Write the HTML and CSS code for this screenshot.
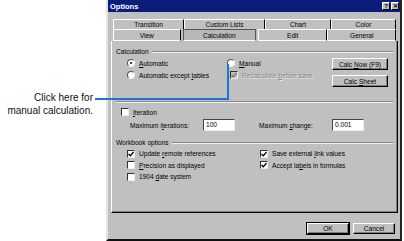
FILE: index.html
```html
<!DOCTYPE html>
<html lang="en">
<head>
  <meta charset="UTF-8">
  <title>Options</title>
  <link rel="stylesheet" href="styles.css">
</head>
<body>

  <div class="page">
    <div class="callout">
      <p>Click here for<br>manual calculation.</p>
    </div>

    <div class="dialog">
      <div class="titlebar">
        <span class="title">Options</span>
        <div class="title-btns">
          <span class="tbtn">?</span>
          <span class="tbtn">&#x2715;</span>
        </div>
      </div>

      <div class="tabs">
        <div class="tab-row back">
          <div class="tab w71">Transition</div>
          <div class="tab w81">Custom Lists</div>
          <div class="tab w66">Chart</div>
          <div class="tab w65">Color</div>
        </div>
        <div class="tab-row front">
          <div class="tab w68">View</div>
          <div class="tab w76 selected">Calculation</div>
          <div class="tab w70">Edit</div>
          <div class="tab w69">General</div>
        </div>
      </div>

      <div class="panel">
        <!-- Calculation group -->
        <div class="group calc">
          <div class="legend"><span>Calculation</span></div>
          <div class="calc-body">
            <div class="col">
              <label class="opt"><span class="radio checked"></span><span><u>A</u>utomatic</span></label>
              <label class="opt"><span class="radio"></span><span>Automatic except <u>t</u>ables</span></label>
            </div>
            <div class="col">
              <label class="opt"><span class="radio"></span><span><u>M</u>anual</span></label>
              <label class="opt sub disabled"><span class="check on grey"><svg viewBox="0 0 6 6"><path d="M0.5 3 L2.3 4.8 L5.5 1"/></svg></span><span>Recalculate <u>b</u>efore save</span></label>
            </div>
            <div class="col buttons">
              <button class="btn">Calc <u>N</u>ow (F9)</button>
              <button class="btn">Calc <u>S</u>heet</button>
            </div>
          </div>
        </div>

        <!-- Iteration -->
        <div class="iter">
          <label class="opt"><span class="check"></span><span><u>I</u>teration</span></label>
          <div class="iter-row">
            <span class="lbl l1">Maximum i<u>t</u>erations:</span>
            <span class="field">100</span>
            <span class="lbl l2">Maximum <u>c</u>hange:</span>
            <span class="field">0.001</span>
          </div>
        </div>

        <!-- Workbook options -->
        <div class="group book">
          <div class="legend"><span>Workbook options</span></div>
          <div class="book-body">
            <div class="col">
              <label class="opt"><span class="check on"><svg viewBox="0 0 6 6"><path d="M0.5 3 L2.3 4.8 L5.5 1"/></svg></span><span>Update <u>r</u>emote references</span></label>
              <label class="opt"><span class="check"></span><span><u>P</u>recision as displayed</span></label>
              <label class="opt"><span class="check"></span><span>1904 <u>d</u>ate system</span></label>
            </div>
            <div class="col">
              <label class="opt"><span class="check on"><svg viewBox="0 0 6 6"><path d="M0.5 3 L2.3 4.8 L5.5 1"/></svg></span><span>Save external <u>l</u>ink values</span></label>
              <label class="opt"><span class="check on"><svg viewBox="0 0 6 6"><path d="M0.5 3 L2.3 4.8 L5.5 1"/></svg></span><span>Accept la<u>b</u>els in formulas</span></label>
            </div>
          </div>
        </div>
      </div>

      <div class="footer">
        <button class="btn default">OK</button>
        <button class="btn">Cancel</button>
      </div>
    </div>

    <!-- leader line from the callout to the Manual option -->
    <div class="leader-h"></div>
    <div class="leader-v"></div>
  </div>

</body>
</html>
```

FILE: styles.css
```css
/* General */
body {
  margin: 0;
  background: #fff;
  font-family: 'Liberation Sans', Arial, sans-serif;
}

.page {
  position: relative;
  display: flex;
  width: 404px;
  height: 241px;
  overflow: hidden;
}

/* Callout text on the left */
.callout {
  width: 106px;
  flex: none;
}

.callout p {
  margin: 91px 13px 0 0;
  font-size: 10px;
  line-height: 13px;
  text-align: right;
  color: #111;
}

.leader-h {
  position: absolute;
  left: 95px;
  top: 98px;
  width: 134px;
  height: 2px;
  background: #1877d2;
}

.leader-v {
  position: absolute;
  left: 227px;
  top: 64px;
  width: 2px;
  height: 36px;
  background: #1877d2;
}

/* Dialog frame */
.dialog {
  width: 292px;
  height: 239px;
  background: #c0c0c0;
  border-left: 2px solid #e4e4e4;
  border-right: 2px solid #222;
  border-bottom: 2px solid #111;
  font-size: 6.6px;
  color: #000;
  display: flex;
  flex-direction: column;
}

.titlebar {
  height: 12px;
  background: #0c1c7c;
  display: flex;
  align-items: center;
  justify-content: space-between;
  padding: 0 1px 0 2px;
}

.title {
  color: #fff;
  font-weight: bold;
  font-size: 7.5px;
}

.title-btns {
  display: flex;
  gap: 1px;
}

.tbtn {
  width: 8px;
  height: 8px;
  background: #c0c0c0;
  border-top: 1px solid #fff;
  border-left: 1px solid #fff;
  border-right: 1px solid #000;
  border-bottom: 1px solid #000;
  box-sizing: border-box;
  font-size: 6px;
  font-weight: bold;
  line-height: 6px;
  text-align: center;
}

/* Tabs */
.tabs {
  margin: 7px 4px 0 5px;
}

.tab-row {
  display: flex;
}

.tab-row.back {
  height: 10px;
}

.tab-row.front {
  height: 12px;
}

.tab {
  box-sizing: border-box;
  border-top: 1px solid #fff;
  border-left: 1px solid #fff;
  border-right: 1px solid #000;
  text-align: center;
  line-height: 9px;
}

.tab-row.front .tab {
  line-height: 11px;
  border-bottom: 1px solid #fff;
}

.tab.selected {
  border: 1px solid #555;
  border-bottom: none;
  background: #b8b8b8;
  margin: 0 2px;
}

.w65 { width: 65px; }
.w66 { width: 66px; }
.w68 { width: 68px; }
.w69 { width: 69px; }
.w70 { width: 70px; }
.w71 { width: 71px; }
.w76 { width: 74px; }
.w81 { width: 81px; }

/* Panel */
.panel {
  height: 172px;
  box-sizing: border-box;
  margin: 0 2px 0 3px;
  border-left: 1px solid #fff;
  border-right: 1px solid #000;
  border-bottom: 1px solid #000;
  box-shadow: inset -1px -1px #808080;
  padding: 6px 4px 0 4px;
}

.legend {
  display: flex;
  align-items: center;
  gap: 3px;
  height: 9px;
}

.legend::after {
  content: '';
  flex: 1;
  height: 1px;
  background: #888;
  border-bottom: 1px solid #eee;
}

.calc {
  height: 54px;
  border-bottom: 1px solid #888;
  box-shadow: 0 1px #eee;
}

.calc-body {
  display: grid;
  grid-template-columns: 100px 105px 56px;
  padding-left: 11px;
}

.col {
  display: flex;
  flex-direction: column;
}

.opt {
  display: flex;
  align-items: center;
  gap: 4px;
  height: 12px;
  white-space: nowrap;
}

.calc .opt:first-child {
  margin-top: 1px;
}

.opt.sub {
  margin-left: 3px;
}

.opt.disabled {
  color: #8a8a8a;
  text-shadow: 1px 1px #e8e8e8;
}

.radio {
  width: 8px;
  height: 8px;
  box-sizing: border-box;
  border-radius: 50%;
  background: #fff;
  border: 1px solid;
  border-color: #555 #eee #eee #555;
  position: relative;
  flex: none;
}

.radio.checked::after {
  content: '';
  position: absolute;
  left: 2px;
  top: 2px;
  width: 2px;
  height: 2px;
  border-radius: 50%;
  background: #000;
}

.check {
  width: 8px;
  height: 8px;
  box-sizing: border-box;
  background: #fff;
  border: 1px solid;
  border-color: #333 #eee #eee #333;
  flex: none;
  display: flex;
}

.check svg {
  width: 6px;
  height: 6px;
}

.check svg path {
  fill: none;
  stroke: #000;
  stroke-width: 1.3;
}

.check.grey {
  background: #c0c0c0;
}

.check.grey svg path {
  stroke: #777;
}

.buttons {
  gap: 5px;
  padding-top: 2px;
}

.btn {
  font-family: inherit;
  font-size: 6.6px;
  color: #000;
  background: #c0c0c0;
  height: 12px;
  padding: 0;
  box-sizing: border-box;
  border: 1px solid;
  border-color: #fff #000 #000 #fff;
  box-shadow: inset -1px -1px #808080;
}

.btn.default {
  outline: 1px solid #000;
}

/* Iteration */
.iter {
  padding: 4px 0 0 5px;
  height: 36px;
  box-sizing: border-box;
}

.iter-row {
  display: flex;
  align-items: center;
  height: 12px;
  margin-top: 1px;
}

.lbl.l1 {
  margin-left: 9px;
  width: 73px;
}

.lbl.l2 {
  margin-left: 24px;
  width: 73px;
}

.field {
  width: 32px;
  height: 12px;
  box-sizing: border-box;
  background: #fff;
  border: 1px solid;
  border-color: #444 #eee #eee #444;
  padding-left: 2px;
  line-height: 10px;
}

/* Workbook options */
.book-body {
  display: grid;
  grid-template-columns: 133px 120px;
  padding-left: 11px;
  margin-top: 1px;
}

.book .opt {
  height: 11.5px;
}

/* Footer buttons */
.footer {
  display: flex;
  justify-content: flex-end;
  gap: 4px;
  padding: 10px 5px 0 0;
}

.footer .btn {
  width: 42px;
  height: 11px;
}
```
